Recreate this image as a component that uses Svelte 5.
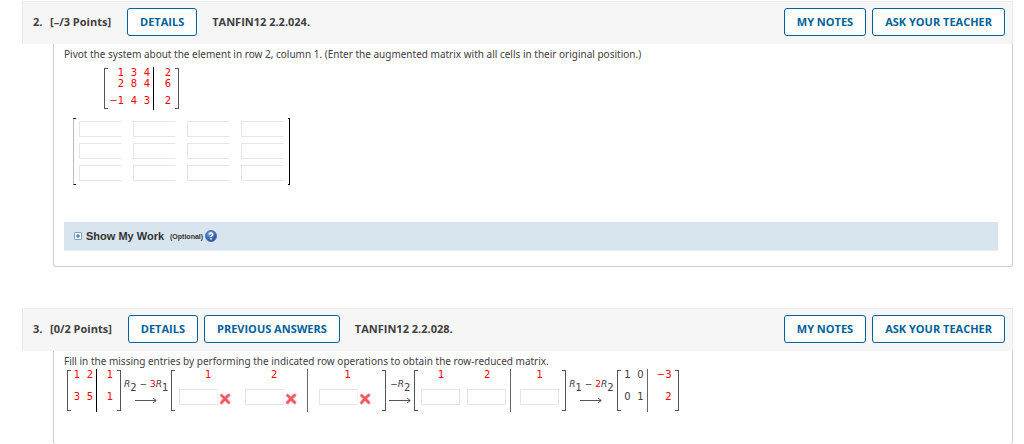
<script>
  const blank = { blank: true };
  const wrong = { blank: true, wrong: true };

  const system = {
    label: 'Augmented matrix',
    layout: 'three',
    rows: [
      ['1', '3', '4', '2'],
      ['2', '8', '4', '6'],
      ['−1', '4', '3', '2']
    ]
  };
  const start = { label: 'Starting matrix', layout: 'two', rows: [['1', '2', '1'], ['3', '5', '1']] };
  const first = { label: 'First step', layout: 'graded', rows: [['1', '2', '1'], [wrong, wrong, wrong]] };
  const second = { label: 'Second step', layout: 'open', rows: [['1', '2', '1'], [blank, blank, blank]] };
  const result = { label: 'Row-reduced matrix', layout: 'result', rows: [['1', '0', '−3'], ['0', '1', '2']] };
</script>

{#snippet matrix(m)}
  <div class="matrix {m.layout}" role="group" aria-label={m.label}>
    <span class="bracket left"></span>
    <div class="cells">
      <span class="rule"></span>
      {#each m.rows as row, r}
        {#each row as cell, c}
          <div class="cell" class:first={c === 0} class:last={c === row.length - 1}>
            {#if cell.blank}
              <input type="text" aria-label="{m.label}, row {r + 1}, column {c + 1}" />
              {#if cell.wrong}
                <svg class="cross" viewBox="0 0 12 12" role="img" aria-label="Incorrect">
                  <path d="M2.6 2.5Q4.6 4.2 6 5.9Q7.5 3.8 9.7 2.2M2.5 9.7Q3.9 7.8 6 5.9Q7.9 7.7 9.7 9.5" fill="none" stroke="#f9a5ad" stroke-width="3.6" stroke-linecap="round" />
                  <path d="M2.6 2.5Q4.6 4.2 6 5.9Q7.5 3.8 9.7 2.2M2.5 9.7Q3.9 7.8 6 5.9Q7.9 7.7 9.7 9.5" fill="none" stroke="#f05560" stroke-width="2.2" stroke-linecap="round" />
                </svg>
              {/if}
            {:else}
              {cell}
            {/if}
          </div>
        {/each}
      {/each}
    </div>
    <span class="bracket right"></span>
  </div>
{/snippet}

{#snippet arrow()}
  <svg class="arrow" viewBox="0 0 22 7" aria-hidden="true">
    <path d="M0 3.5H21M18 1L21.3 3.5L18 6" fill="none" stroke="#555" stroke-width="1" />
  </svg>
{/snippet}

{#snippet actions()}
  <div class="actions">
    <button type="button">MY NOTES</button>
    <button type="button">ASK YOUR TEACHER</button>
  </div>
{/snippet}

<main>
  <section>
    <header>
      <span class="number">2.</span>
      <span class="points">[–/3 Points]</span>
      <button type="button">DETAILS</button>
      <h2>TANFIN12 2.2.024.</h2>
      {@render actions()}
    </header>
    <div class="body">
      <p>Pivot the system about the element in row 2, column 1. (Enter the augmented matrix with all cells in their original position.)</p>
      <div class="given">{@render matrix(system)}</div>
      <div class="answer" role="group" aria-label="Answer matrix">
        <span class="bracket left"></span>
        <div class="fields">
          {#each Array(12) as _, i}
            <input type="text" aria-label="Answer row {Math.floor(i / 4) + 1}, column {(i % 4) + 1}" />
          {/each}
        </div>
        <span class="bracket right"></span>
      </div>
      <div class="work">
        <button type="button" class="toggle">
          <svg class="plus" viewBox="0 0 8 8" aria-hidden="true">
            <rect x=".5" y=".5" width="7" height="7" rx=".5" fill="#f7fbff" stroke="#7fa3c7" />
            <path d="M2 4H6M4 2V6" stroke="#35608f" />
          </svg>
          Show My Work <small>(Optional)</small>
        </button>
        <button type="button" class="help" aria-label="Help">
          <svg viewBox="0 0 12 12" aria-hidden="true">
            <defs>
              <radialGradient id="orb" cx=".4" cy=".3" r=".75">
                <stop offset="0" stop-color="#7fa3dc" />
                <stop offset=".6" stop-color="#3968b4" />
                <stop offset="1" stop-color="#214a91" />
              </radialGradient>
            </defs>
            <circle cx="6" cy="6" r="5.5" fill="url(#orb)" stroke="#4a72b3" />
            <path d="M4.2 4.6Q4.3 3 6 3Q7.8 3 7.8 4.5Q7.8 5.4 6.8 5.9Q6 6.3 6 7.1" fill="none" stroke="#fff" stroke-width="1.4" />
            <circle cx="6" cy="8.8" r=".9" fill="#fff" />
          </svg>
        </button>
      </div>
    </div>
  </section>

  <section class="rest">
    <header>
      <span class="number">3.</span>
      <span class="points">[0/2 Points]</span>
      <button type="button">DETAILS</button>
      <button type="button">PREVIOUS ANSWERS</button>
      <h2>TANFIN12 2.2.028.</h2>
      {@render actions()}
    </header>
    <div class="body">
      <p>Fill in the missing entries by performing the indicated row operations to obtain the row-reduced matrix.</p>
      <div class="steps">
        {@render matrix(start)}
        <div class="op"><span><i>R</i><sub>2</sub> − <b>3</b><i>R</i><sub>1</sub></span>{@render arrow()}</div>
        {@render matrix(first)}
        <div class="op"><span>−<i>R</i><sub>2</sub></span>{@render arrow()}</div>
        {@render matrix(second)}
        <div class="op"><span><i>R</i><sub>1</sub> − <b>2</b><i>R</i><sub>2</sub></span>{@render arrow()}</div>
        {@render matrix(result)}
      </div>
    </div>
  </section>
</main>

<style>
  :global(body) {
    background: #fff;
  }
  main {
    box-sizing: border-box;
    min-height: 100vh;
    display: flex;
    flex-direction: column;
    gap: 41px;
    padding: 1px 11px 0 22px;
    font: 10px/12px Verdana, "DejaVu Sans", sans-serif;
    color: #404040;
  }
  section {
    display: flex;
    flex-direction: column;
  }
  .rest,
  .rest .body {
    flex: 1;
  }
  .rest .body {
    border-bottom: 0;
  }
  header {
    display: flex;
    align-items: center;
    padding: 6px 7px 8px 10px;
    background: #f6f6f6;
    border: 1px solid #ebebeb;
    border-bottom: 0;
    font: 700 11px/14px "Open Sans", sans-serif;
  }
  .number {
    width: 17px;
  }
  .points {
    margin-right: 16px;
  }
  h2 {
    margin: 0 0 0 9px;
    font: inherit;
  }
  header button {
    height: 28px;
    margin-right: 6px;
    padding: 0 12px;
    border: 1px solid #00629b;
    border-radius: 3px;
    background: #fff;
    color: #00629b;
    font: inherit;
    white-space: nowrap;
  }
  .actions {
    display: flex;
    margin-left: auto;
  }
  .actions button:last-child {
    margin-right: 0;
  }
  .body {
    margin-left: 31px;
    padding: 4px 14px 15px 10px;
    border: 1px solid #ccc;
    border-top: 0;
    border-radius: 0 0 3px 3px;
  }
  p {
    margin: 0;
    padding-bottom: 2px;
    font: 10px/12px "Noto Sans", sans-serif;
  }
  input {
    box-sizing: border-box;
    min-width: 0;
    height: 16px;
    padding: 0 2px;
    border: 1px solid #e6e6e6;
    border-radius: 0;
    background: #fff;
    color: inherit;
    font: inherit;
  }
  .bracket {
    width: 4px;
    box-sizing: border-box;
    border: 1px solid #555;
  }
  .bracket.left {
    border-right: 0;
  }
  .bracket.right {
    border-left: 0;
  }
  .matrix {
    display: flex;
    color: #f00;
  }
  .matrix > .bracket {
    height: 41px;
    margin-top: 1px;
  }
  .cells {
    display: grid;
    height: 43px;
    text-align: right;
  }
  .rule {
    grid-row: 1 / -1;
    border-left: 1px solid #000;
  }
  .cell.first {
    grid-column: 1;
  }
  .cell.last {
    grid-column: -3;
  }
  .given {
    margin: 5px 0 8px 40px;
  }
  .three .cells {
    grid-template: 11px 14px 18px / 16px 13px 13px 4px 17px 4px;
  }
  .three .rule {
    grid-column: 4;
    justify-self: end;
  }
  .three .cell:nth-last-child(-n + 4) {
    padding-top: 3px;
  }
  .two .cells {
    grid-template: 22px 21px / 9px 13px 4px 16px 4px;
  }
  .result .cells {
    grid-template: 22px 21px / 10px 13px 4px 24px 3px;
  }
  .result .cell:not(.last) {
    color: #404040;
  }
  .two .rule,
  .result .rule {
    grid-column: 3;
    justify-self: end;
  }
  .result .rule,
  .graded .rule,
  .open .rule {
    border-color: #666;
  }
  .graded .cells {
    grid-template: 20px 23px / 66px 66px 8px 65px 2px;
  }
  .open .cells {
    grid-template: 20px 23px / 46px 46px 7px 45px 0;
  }
  .graded .cell,
  .open .cell {
    text-align: center;
  }
  .graded .rule,
  .open .rule {
    grid-column: 3;
    justify-self: start;
  }
  .graded .cell:nth-last-child(-n + 3),
  .open .cell:nth-last-child(-n + 3) {
    display: flex;
    gap: 1px;
    padding-left: 3px;
  }
  .graded .cell:nth-last-child(-n + 3) {
    padding-left: 4px;
  }
  .graded input,
  .open input {
    width: 39px;
  }
  .graded input {
    border-right-color: #f4f4f4;
  }
  .cross {
    width: 12px;
    height: 12px;
    margin-top: 4px;
  }
  .answer {
    display: flex;
    width: fit-content;
    margin: 0 0 37px 9px;
  }
  .answer .bracket {
    border-color: #000;
  }
  .answer .bracket.left {
    width: 3px;
    border-left-color: #bbb;
  }
  .answer .bracket.right {
    width: 2px;
  }
  .fields {
    display: grid;
    grid-template-columns: repeat(4, 43px);
    gap: 6px 11px;
    padding: 3px 4px 4px 3px;
  }
  .fields input {
    border-right-color: #fff;
  }
  .work {
    display: flex;
    align-items: center;
    gap: 2px;
    padding: 6px 10px;
    border-bottom: 1px solid #e6eef4;
    background: #d9e5ee;
  }
  .work button {
    display: flex;
    align-items: center;
    padding: 0;
    border: 0;
    background: none;
  }
  .work .toggle {
    height: 16px;
    color: #333;
    font: 700 11px/14px Arial, "Liberation Sans", sans-serif;
  }
  .toggle small {
    margin: 2px 0 0 6px;
    font-size: 7px;
  }
  .plus {
    width: 8px;
    height: 8px;
    margin-right: 4px;
  }
  .help svg {
    display: block;
    width: 12px;
    height: 12px;
  }
  .steps {
    display: flex;
    align-items: flex-start;
    margin-left: 3px;
  }
  .op {
    display: flex;
    flex-direction: column;
    align-items: center;
    gap: 7px;
    padding: 9px 3px 0;
    font-size: 9px;
    white-space: nowrap;
  }
  .op b {
    color: #f00;
    font-weight: 400;
  }
  .op sub {
    font-size: 10px;
    line-height: 0;
    vertical-align: -4px;
  }
  .arrow {
    width: 22px;
    height: 7px;
  }
</style>
